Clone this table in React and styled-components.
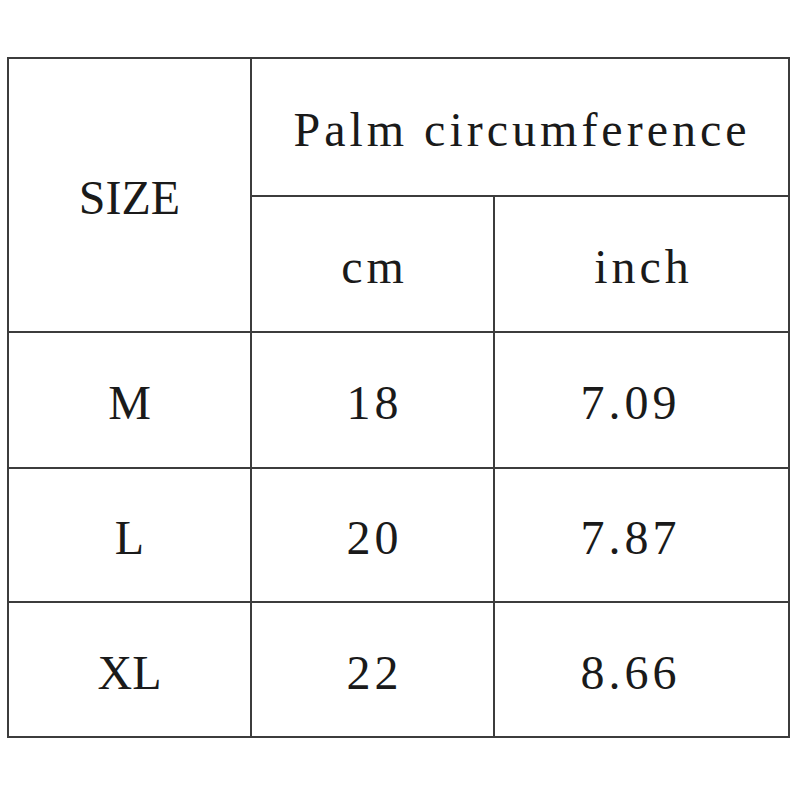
import React from 'react';
import styled, { createGlobalStyle } from 'styled-components';

const GlobalStyle = createGlobalStyle`
  html, body {
    margin: 0;
    padding: 0;
    background: #fff;
  }
`;

const rows = [
  { size: 'M', cm: '18', inch: '7.09' },
  { size: 'L', cm: '20', inch: '7.87' },
  { size: 'XL', cm: '22', inch: '8.66' },
];

function App() {
  return (
    <>
      <GlobalStyle />
      <Page>
        <Table>
          <Cell $rowSpan={2}>
            <Label $spacing={0}>SIZE</Label>
          </Cell>
          <Cell $colSpan={2}>
            <Label>Palm circumference</Label>
          </Cell>
          <Cell>
            <Label>cm</Label>
          </Cell>
          <Cell>
            <Label>inch</Label>
          </Cell>
          {rows.map((r) => (
            <React.Fragment key={r.size}>
              <Cell>
                <Label $spacing={0}>{r.size}</Label>
              </Cell>
              <Cell>
                <Label>{r.cm}</Label>
              </Cell>
              <Cell $trail={26}>
                <Label>{r.inch}</Label>
              </Cell>
            </React.Fragment>
          ))}
        </Table>
      </Page>
    </>
  );
}

export default App;

const Page = styled.div`
  width: 800px;
  height: 800px;
  padding: 57px 0 0 7px;
  box-sizing: border-box;
  background: #fff;
`;

const Table = styled.div`
  display: grid;
  grid-template-columns: 243px 243px 295px;
  grid-template-rows: 138px 136px 136px 134px 135px;
  width: max-content;
  border-top: 2px solid #3c3c3c;
  border-left: 2px solid #3c3c3c;
`;

const Cell = styled.div`
  grid-row: span ${(p) => p.$rowSpan || 1};
  grid-column: span ${(p) => p.$colSpan || 1};
  display: flex;
  align-items: center;
  justify-content: center;
  padding-top: 5px;
  padding-right: ${(p) => p.$trail || 0}px;
  box-sizing: border-box;
  border-right: 2px solid #3c3c3c;
  border-bottom: 2px solid #3c3c3c;
`;

const Label = styled.span`
  font-family: 'Liberation Serif', 'Times New Roman', serif;
  font-size: 48px;
  color: #1a1a1a;
  letter-spacing: ${(p) => p.$spacing ?? 4}px;
  margin-right: -${(p) => p.$spacing ?? 4}px;
  white-space: nowrap;
`;
